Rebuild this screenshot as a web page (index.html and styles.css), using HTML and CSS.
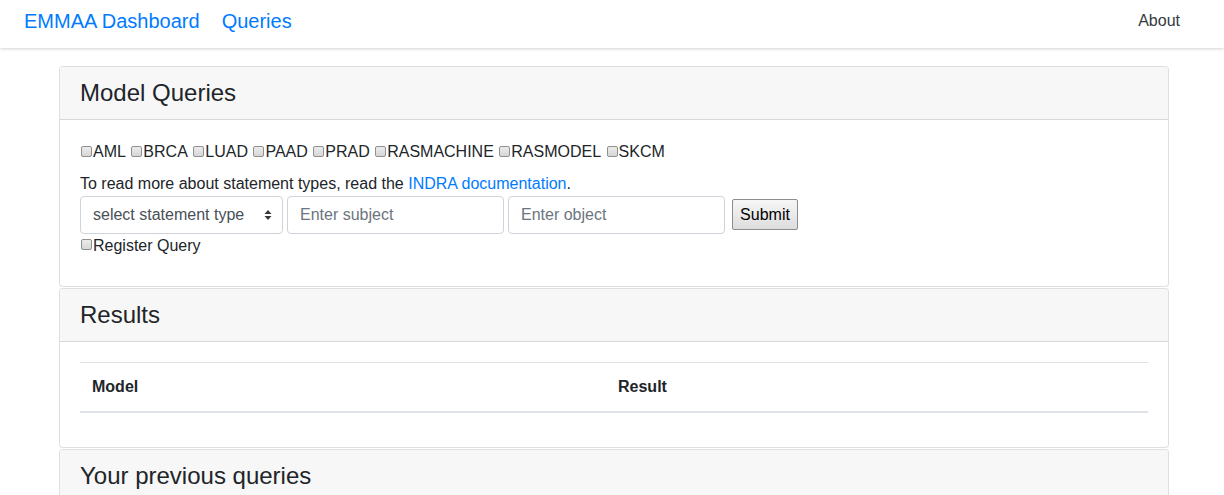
FILE: index.html
```html
<!DOCTYPE html>
<html>
<head>
<meta charset="utf-8">
<title>EMMAA Queries</title>
<link rel="stylesheet" href="styles.css">
</head>
<body>
<nav class="navbar">
  <div class="nav-left">
    <a class="brand" href="#">EMMAA Dashboard</a>
    <a class="brand-link" href="#">Queries</a>
  </div>
  <a class="nav-about" href="#">About</a>
</nav>
<main class="container">
  <section class="card">
    <div class="card-header"><h4>Model Queries</h4></div>
    <div class="card-body first">
      <div class="models"><label class="chk"><input type="checkbox">AML</label> <label class="chk"><input type="checkbox">BRCA</label> <label class="chk"><input type="checkbox">LUAD</label> <label class="chk"><input type="checkbox">PAAD</label> <label class="chk"><input type="checkbox">PRAD</label> <label class="chk"><input type="checkbox">RASMACHINE</label> <label class="chk"><input type="checkbox">RASMODEL</label> <label class="chk"><input type="checkbox">SKCM</label></div>
      <p class="info">To read more about statement types, read the <a href="#">INDRA documentation</a>.</p>
      <form class="query-form">
        <div class="select-wrap">
          <span class="select-text">select statement type</span>
          <svg class="arrows" width="8" height="12" viewBox="0 0 8 12"><path d="M4 1 L7.5 5 L0.5 5 Z M4 11 L7.5 7 L0.5 7 Z" fill="#343a40"/></svg>
        </div>
        <input class="form-control subject" type="text" placeholder="Enter subject">
        <input class="form-control object" type="text" placeholder="Enter object">
        <button class="submit" type="button">Submit</button>
      </form>
      <label class="chk register"><input type="checkbox">Register Query</label>
    </div>
  </section>
  <section class="card">
    <div class="card-header"><h4>Results</h4></div>
    <div class="card-body">
      <table class="table">
        <thead>
          <tr><th class="col-model">Model</th><th>Result</th></tr>
        </thead>
      </table>
    </div>
  </section>
  <section class="card">
    <div class="card-header"><h4>Your previous queries</h4></div>
    <div class="card-body tall"></div>
  </section>
</main>
</body>
</html>
```
FILE: styles.css
```css
* { box-sizing: border-box; }
html, body { margin: 0; padding: 0; }
body {
  font-family: "Liberation Sans", Arial, Helvetica, sans-serif;
  font-size: 16px;
  line-height: 1.5;
  color: #212529;
  background: #fff;
  overflow: hidden;
}
a { color: #007bff; text-decoration: none; }

.navbar {
  height: 48px;
  display: flex;
  align-items: center;
  justify-content: space-between;
  padding: 0 44px 0 24px;
  background: #fff;
  box-shadow: 0 1px 3px rgba(0,0,0,0.18);
  position: relative;
  z-index: 2;
}
.nav-left { display: flex; align-items: center; gap: 22px; }
.brand, .brand-link {
  font-size: 20px;
  line-height: 30px;
  color: #007bff;
  position: relative;
  top: -3px;
}
.nav-about {
  color: #343a40;
  font-size: 16px;
  line-height: 24px;
  position: relative;
  top: -3px;
}

.container {
  width: 1110px;
  margin: 18px 0 0 59px;
}
.card {
  border: 1px solid rgba(0,0,0,0.125);
  border-radius: 4px;
  background: #fff;
  margin-bottom: 1px;
}
.card-header {
  background: #f7f7f7;
  border-bottom: 1px solid rgba(0,0,0,0.125);
  padding: 12px 20px;
  border-radius: 3px 3px 0 0;
}
.card-header h4 {
  margin: 0;
  font-size: 24px;
  font-weight: 400;
  line-height: 28px;
}
.card-body { padding: 20px 20px 18px; }
.card-body.first { padding: 20px 20px 28px; }
.card-body.tall { height: 60px; }

.chk { display: inline-flex; align-items: center; }
.chk input {
  -webkit-appearance: none;
  appearance: none;
  width: 11px;
  height: 11px;
  margin: 0 1px 0 1px;
  border: 1px solid #909090;
  border-radius: 2px;
  background: linear-gradient(#ececec, #d6d6d6);
  position: relative;
  top: -1px;
}
.models { line-height: 24px; }

.info { margin: 7px 0 0; line-height: 24px; }

.query-form {
  display: flex;
  align-items: center;
  gap: 4px;
  margin-top: 0;
}
.select-wrap {
  width: 203px;
  height: 38px;
  border: 1px solid #ced4da;
  border-radius: 4px;
  display: flex;
  align-items: center;
  justify-content: space-between;
  padding: 0 10px 0 12px;
  color: #495057;
}
.select-text { font-size: 16px; }
.form-control {
  width: 217px;
  height: 38px;
  border: 1px solid #ced4da;
  border-radius: 4px;
  padding: 6px 12px;
  font-family: inherit;
  font-size: 16px;
  color: #495057;
}
.form-control::placeholder { color: #6c757d; }
.submit {
  margin-left: 3px;
  height: 31px;
  width: 66px;
  padding: 0;
  font-family: inherit;
  font-size: 16px;
  color: #000;
  border: 1px solid #8d8d8d;
  border-radius: 2px;
  background: linear-gradient(#f6f6f6, #dddddd);
}
.register { margin-top: 1px; line-height: 22px; }

.table {
  width: 100%;
  border-collapse: collapse;
  margin-bottom: 16px;
}
.table th {
  text-align: left;
  padding: 12px;
  line-height: 24px;
  font-weight: 700;
  border-top: 1px solid #dee2e6;
  border-bottom: 2px solid #dee2e6;
}
.col-model { width: 526px; }
```
